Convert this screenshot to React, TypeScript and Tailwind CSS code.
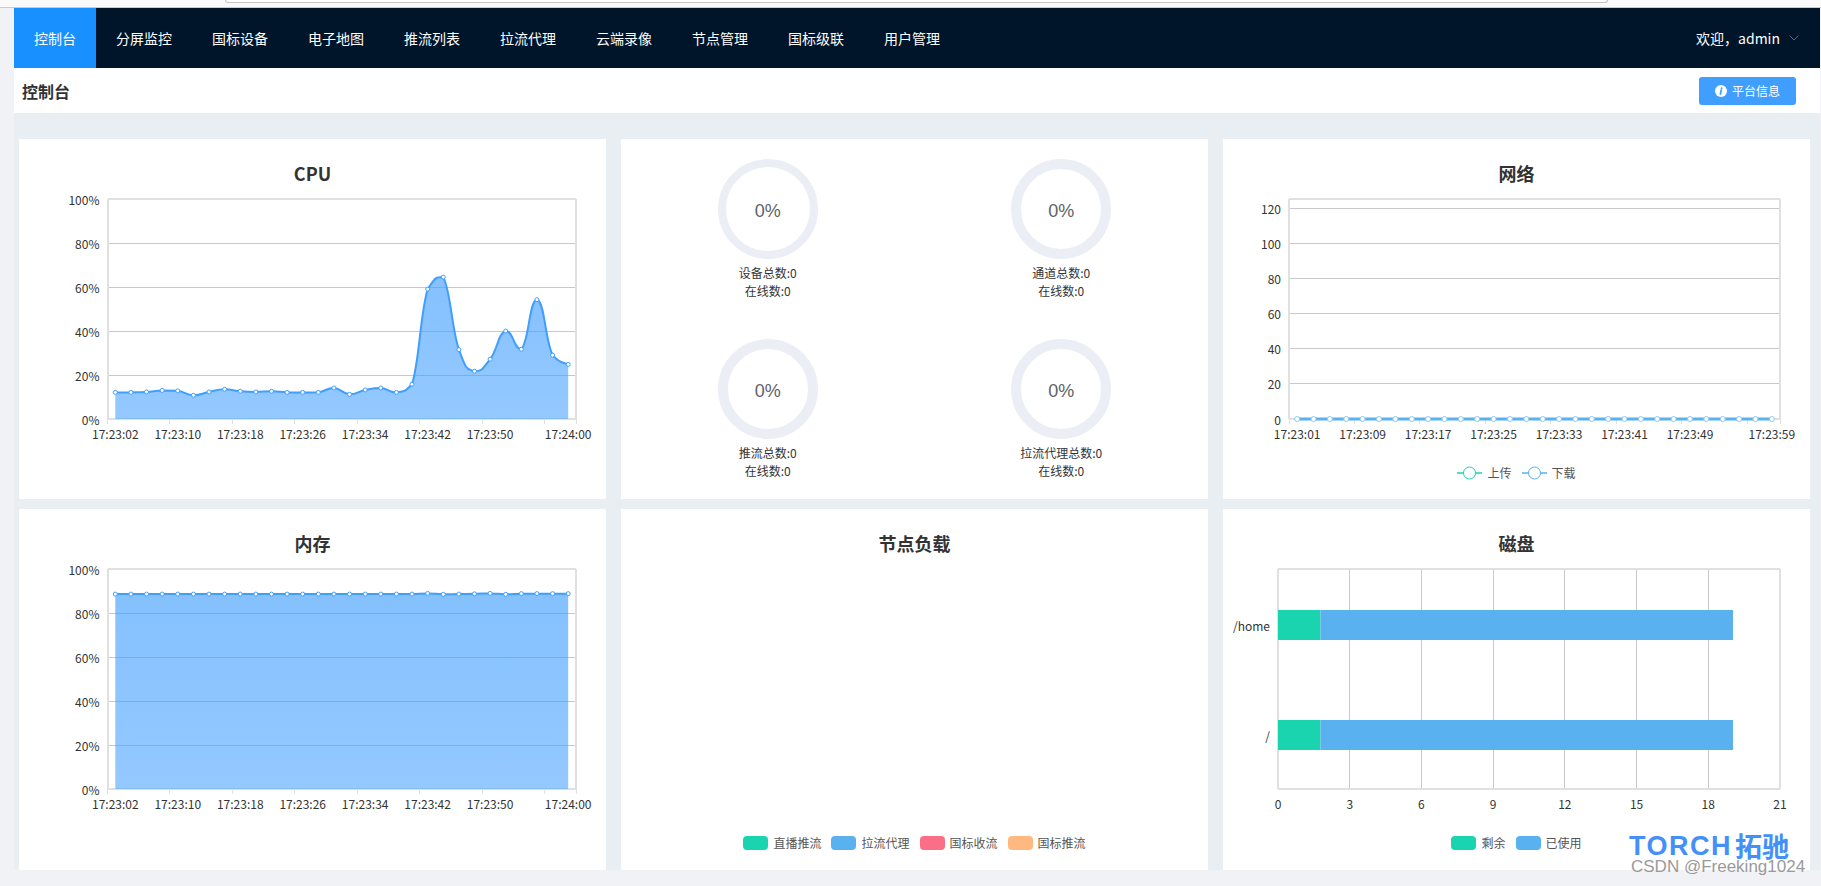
import { ChevronDown } from 'lucide-react';

const navItems = ['分屏监控', '国标设备', '电子地图', '推流列表', '拉流代理', '云端录像', '节点管理', '国标级联', '用户管理'];

const cpuData = [12.1, 12.1, 12.3, 13, 12.8, 10.8, 12.3, 13.5, 12.6, 12.3, 12.6, 12.1, 12.1, 12.1, 14.1, 11.2, 13.2, 14.1, 12.1, 15.8, 59, 64.5, 31.5, 21.7, 27.2, 40, 31.7, 54.2, 29, 24.8];
const memData = [88.6, 88.6, 88.6, 88.6, 88.6, 88.6, 88.6, 88.6, 88.6, 88.6, 88.6, 88.6, 88.6, 88.6, 88.6, 88.6, 88.6, 88.6, 88.6, 88.6, 88.9, 88.5, 88.6, 88.7, 88.9, 88.5, 88.8, 88.8, 88.8, 88.8];
const netData = Array.from({ length: 30 }, () => 0);

const pctTicks = [0, 20, 40, 60, 80, 100];
const netTicks = [0, 20, 40, 60, 80, 100, 120];
const cpuLabels = ['17:23:02', '17:23:10', '17:23:18', '17:23:26', '17:23:34', '17:23:42', '17:23:50', '17:24:00'];
const netLabels = ['17:23:01', '17:23:09', '17:23:17', '17:23:25', '17:23:33', '17:23:41', '17:23:49', '17:23:59'];
const labelIndexes = [0, 4, 8, 12, 16, 20, 24, 29];
const tickIndexes = [0, 4, 8, 12, 16, 20, 24, 28, 30];

const TOP = 60;
const BOTTOM = 280;
const RIGHT = 557;

// control points stay inside the segment's y range, so peaks do not overshoot
function smoothPath(pts: number[][]) {
  let d = `M${pts[0][0]},${pts[0][1]}`;
  for (let i = 0; i < pts.length - 1; i++) {
    const p0 = pts[Math.max(i - 1, 0)];
    const p1 = pts[i];
    const p2 = pts[i + 1];
    const p3 = pts[Math.min(i + 2, pts.length - 1)];
    const lo = Math.min(p1[1], p2[1]);
    const hi = Math.max(p1[1], p2[1]);
    const c1y = Math.min(hi, Math.max(lo, p1[1] + (p2[1] - p0[1]) * 0.25));
    const c2y = Math.min(hi, Math.max(lo, p2[1] - (p3[1] - p1[1]) * 0.25));
    const c1x = p1[0] + (p2[0] - p0[0]) * 0.25;
    const c2x = p2[0] - (p3[0] - p1[0]) * 0.25;
    d += ` C${c1x},${c1y} ${c2x},${c2y} ${p2[0]},${p2[1]}`;
  }
  return d;
}

function Frame({ left }: { left: number }) {
  return (
    <g fill="none" stroke="#e0e0e0" strokeWidth={2} shapeRendering="crispEdges">
      <line x1={left} y1={TOP} x2={RIGHT} y2={TOP} />
      <line x1={left} y1={BOTTOM} x2={RIGHT} y2={BOTTOM} />
      <line x1={left} y1={TOP} x2={left} y2={BOTTOM} />
      <line x1={RIGHT} y1={TOP} x2={RIGHT} y2={BOTTOM} />
    </g>
  );
}

type LineChartProps = {
  id: string;
  data: number[];
  left: number;
  ticks: number[];
  unit: string;
  pxPerUnit: number;
  labels: string[];
  color: string;
  pointColor: string;
  lineWidth?: number;
  pointSize?: number;
  area?: boolean;
};

function LineChart({ id, data, left, ticks, unit, pxPerUnit, labels, color, pointColor, lineWidth = 2, pointSize = 2, area }: LineChartProps) {
  const band = (RIGHT - left) / data.length;
  const pts = data.map((v, i) => [left + band * (i + 0.5), BOTTOM - v * pxPerUnit]);
  const line = smoothPath(pts);
  const fillPath = `${line} L${pts[pts.length - 1][0]},${BOTTOM} L${pts[0][0]},${BOTTOM} Z`;

  return (
    <svg width={587} height={268} viewBox="0 47 587 268" className="block">
      <defs>
        <linearGradient id={id} x1="0" y1="0" x2="0" y2="1">
          <stop offset="0%" stopColor="#409eff" stopOpacity={0.64} />
          <stop offset="100%" stopColor="#409eff" stopOpacity={0.56} />
        </linearGradient>
      </defs>
      {ticks.filter((t) => t !== 0).map((t) => (
        <line key={t} x1={left} x2={RIGHT} y1={BOTTOM - t * pxPerUnit} y2={BOTTOM - t * pxPerUnit} stroke="#c8c8c8" shapeRendering="crispEdges" />
      ))}
      <Frame left={left} />
      {tickIndexes.map((i) => (
        <line key={i} x1={left + band * i} x2={left + band * i} y1={BOTTOM} y2={BOTTOM + 5} stroke="#e0e0e0" shapeRendering="crispEdges" />
      ))}
      {area && <path d={fillPath} fill={`url(#${id})`} />}
      <path d={line} fill="none" stroke={color} strokeWidth={lineWidth} />
      {pts.map((p, i) => (
        <circle key={i} cx={p[0]} cy={p[1]} r={pointSize} fill="#ffffff" stroke={pointColor} />
      ))}
      {ticks.map((t) => (
        <text key={t} x={left - 8} y={BOTTOM - t * pxPerUnit} textAnchor="end" dominantBaseline="central" fontSize={12} fill="#333333">
          {t}{unit}
        </text>
      ))}
      {labels.map((label, i) => (
        <text key={label} x={pts[labelIndexes[i]][0]} y={294} textAnchor="middle" dominantBaseline="central" fontSize={12} fill="#333333">
          {label}
        </text>
      ))}
    </svg>
  );
}

function DiskChart() {
  const left = 55;
  const perUnit = (RIGHT - left) / 21;
  const rows = [
    { name: '/home', top: 101 },
    { name: '/', top: 211 },
  ];
  return (
    <svg width={587} height={268} viewBox="0 47 587 268" className="block">
      {[3, 6, 9, 12, 15, 18].map((t) => (
        <line key={t} x1={left + t * perUnit} x2={left + t * perUnit} y1={TOP} y2={BOTTOM} stroke="#c8c8c8" shapeRendering="crispEdges" />
      ))}
      <Frame left={left} />
      {rows.map((r) => (
        <g key={r.name}>
          <rect x={left} y={r.top} width={42.5} height={30} fill="#19d4ae" />
          <rect x={left + 42.5} y={r.top} width={412.5} height={30} fill="#5ab1ef" />
          <text x={47} y={r.top + 15} textAnchor="end" dominantBaseline="central" fontSize={12} fill="#333333">
            {r.name}
          </text>
        </g>
      ))}
      {[0, 3, 6, 9, 12, 15, 18, 21].map((t) => (
        <text key={t} x={left + t * perUnit} y={294} textAnchor="middle" dominantBaseline="central" fontSize={12} fill="#333333">
          {t}
        </text>
      ))}
    </svg>
  );
}

function Card({ title, children }: { title: string; children: React.ReactNode }) {
  return (
    <div className="h-full bg-white flex flex-col">
      <h3 className="pt-[21px] h-[47px] text-center text-[18px] leading-[26px] font-bold text-[#333333]">{title}</h3>
      {children}
    </div>
  );
}

function Legend({ items }: { items: { name: string; color: string }[] }) {
  return (
    <div className="flex justify-center gap-[10px] h-[14px]">
      {items.map((item) => (
        <div key={item.name} className="flex items-center gap-[5px] text-[12px] leading-[14px] text-[#555555]">
          <span className="w-[25px] h-[14px] rounded-[4px]" style={{ backgroundColor: item.color }} />
          {item.name}
        </div>
      ))}
    </div>
  );
}

function LineLegendIcon({ color }: { color: string }) {
  return (
    <svg width={25} height={14} className="block">
      <line x1={0} x2={25} y1={7} y2={7} stroke={color} strokeWidth={1.5} />
      <circle cx={12.5} cy={7} r={6} fill="#ffffff" stroke={color} />
    </svg>
  );
}

function Gauge({ total, thickness }: { total: string; thickness: string }) {
  return (
    <div className="flex flex-col items-center pt-5">
      <div className={`w-[100px] h-[100px] rounded-full border-[#ebeef5] flex items-center justify-center ${thickness}`}>
        <span className="font-['Liberation_Sans',sans-serif] text-[18px] text-[#606266] mt-[4px]">0%</span>
      </div>
      <div className="mt-[5px] text-center text-[12px] leading-[18px] text-[#333333]">
        <p>{total}</p>
        <p>在线数:0</p>
      </div>
    </div>
  );
}

export default function App() {
  return (
    <div className="relative w-full h-[886px] overflow-hidden bg-[#f0f2f5] font-['Noto_Sans_CJK_SC','Noto_Sans',sans-serif]">
      {/* browser strip at the very top */}
      <div className="h-[8px] bg-[#fafafa] border-b border-[#cccccc]">
        <div className="ml-[225px] w-[1383px] h-[3px] bg-white border-x border-b border-[#c4c4c4] rounded-b-[4px]" />
      </div>

      <div className="pl-[14px] pr-px">
        <nav className="h-[60px] bg-[#001529] flex text-[14px] text-white">
          <a className="w-[82px] flex items-center justify-center bg-[#1890ff]">控制台</a>
          {navItems.map((item) => (
            <a key={item} className="w-[96px] flex items-center justify-center">
              {item}
            </a>
          ))}
          <div className="ml-auto flex items-center gap-[6px] pr-[18px]">
            <span>欢迎，admin</span>
            <ChevronDown size={16} strokeWidth={1} className="text-[#909399]" />
          </div>
        </nav>

        <header className="h-[45px] bg-white flex items-center justify-between pl-[8px] pr-[24px]">
          <h2 className="text-[16px] font-bold text-[#303133]">控制台</h2>
          <button className="h-[28px] w-[97px] rounded-[3px] bg-[#409eff] text-white text-[12px] flex items-center justify-center gap-[5px]">
            <svg width={12} height={12} viewBox="0 0 12 12" className="block">
              <circle cx={6} cy={6} r={6} fill="#ffffff" />
              <circle cx={6.6} cy={3.2} r={1} fill="#409eff" />
              <path d="M6.2 5 L5.4 9.2" stroke="#409eff" strokeWidth={1.7} strokeLinecap="round" />
            </svg>
            平台信息
          </button>
        </header>

        <main className="h-[757px] bg-[#e9eef3] pt-[26px] pl-[5px] pr-[10px] grid grid-cols-3 grid-rows-[360px_361px] gap-x-[15px] gap-y-[10px]">
          <Card title="CPU">
            <LineChart id="cpu" data={cpuData} left={88.5} ticks={pctTicks} unit="%" pxPerUnit={2.2} labels={cpuLabels} color="#409eff" pointColor="#409eff" area />
          </Card>

          <div className="h-full bg-white grid grid-cols-2 grid-rows-2">
            <Gauge total="设备总数:0" thickness="border-[8px]" />
            <Gauge total="通道总数:0" thickness="border-[10px]" />
            <Gauge total="推流总数:0" thickness="border-[10px]" />
            <Gauge total="拉流代理总数:0" thickness="border-[10px]" />
          </div>

          <Card title="网络">
            <LineChart id="net" data={netData} left={66} ticks={netTicks} unit="" pxPerUnit={1.755} labels={netLabels} color="#5ab1ef" pointColor="#8cc8f5" lineWidth={3} pointSize={2.5} />
            <div className="mt-[12px] flex justify-center gap-[10px] h-[14px]">
              <div className="flex items-center gap-[5px] text-[12px] leading-[14px] text-[#555555]">
                <LineLegendIcon color="#19d4ae" />
                上传
              </div>
              <div className="flex items-center gap-[5px] text-[12px] leading-[14px] text-[#555555]">
                <LineLegendIcon color="#5ab1ef" />
                下载
              </div>
            </div>
          </Card>

          <Card title="内存">
            <LineChart id="mem" data={memData} left={88.5} ticks={pctTicks} unit="%" pxPerUnit={2.2} labels={cpuLabels} color="#409eff" pointColor="#409eff" area />
          </Card>

          <Card title="节点负载">
            <div className="mt-auto mb-[20px]">
              <Legend
                items={[
                  { name: '直播推流', color: '#19d4ae' },
                  { name: '拉流代理', color: '#5ab1ef' },
                  { name: '国标收流', color: '#fa6e86' },
                  { name: '国标推流', color: '#ffb980' },
                ]}
              />
            </div>
          </Card>

          <Card title="磁盘">
            <DiskChart />
            <div className="mt-[12px]">
              <Legend
                items={[
                  { name: '剩余', color: '#19d4ae' },
                  { name: '已使用', color: '#5ab1ef' },
                ]}
              />
            </div>
          </Card>
        </main>
      </div>

      {/* logo and watermark sit on top of the page */}
      <div className="absolute left-[1629px] top-[835px] flex items-center h-[22px] text-[#4490f8] font-bold">
        <div className="font-['Liberation_Sans',sans-serif] text-[27px] tracking-[1.5px] leading-[22px]">TORCH</div>
        <div className="ml-[3px] text-[27px] leading-[22px]">拓驰</div>
      </div>
      <div className="absolute left-[1631px] top-[858px] font-['Liberation_Sans',sans-serif] text-[17px] leading-[18px] text-[#9a9a9a]">
        CSDN @Freeking1024
      </div>
    </div>
  );
}
